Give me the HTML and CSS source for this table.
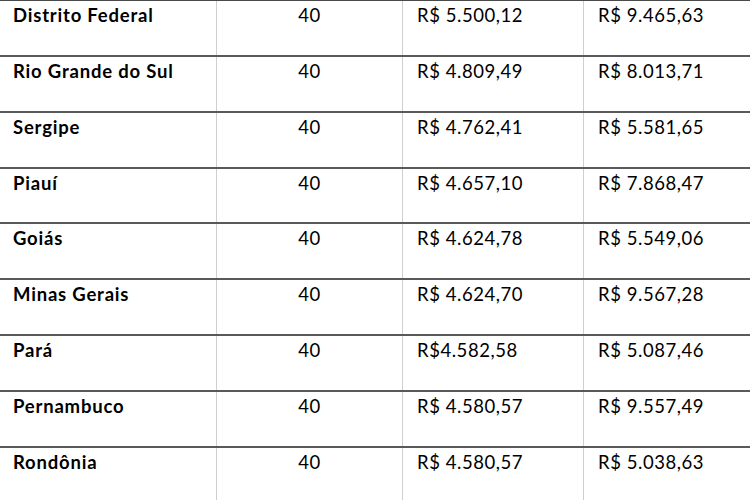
FILE: index.html
```html
<!DOCTYPE html>
<html lang="pt-BR">
<head>
<meta charset="utf-8">
<link rel="stylesheet" href="styles.css">
</head>
<body>
<div class="table">
  <div class="row"><div class="cell state">Distrito Federal</div><div class="cell hours">40</div><div class="cell money">R$ 5.500,12</div><div class="cell money last">R$ 9.465,63</div></div>
  <div class="row"><div class="cell state">Rio Grande do Sul</div><div class="cell hours">40</div><div class="cell money">R$ 4.809,49</div><div class="cell money last">R$ 8.013,71</div></div>
  <div class="row"><div class="cell state">Sergipe</div><div class="cell hours">40</div><div class="cell money">R$ 4.762,41</div><div class="cell money last">R$ 5.581,65</div></div>
  <div class="row"><div class="cell state">Piauí</div><div class="cell hours">40</div><div class="cell money">R$ 4.657,10</div><div class="cell money last">R$ 7.868,47</div></div>
  <div class="row"><div class="cell state">Goiás</div><div class="cell hours">40</div><div class="cell money">R$ 4.624,78</div><div class="cell money last">R$ 5.549,06</div></div>
  <div class="row"><div class="cell state">Minas Gerais</div><div class="cell hours">40</div><div class="cell money">R$ 4.624,70</div><div class="cell money last">R$ 9.567,28</div></div>
  <div class="row"><div class="cell state">Pará</div><div class="cell hours">40</div><div class="cell money">R$4.582,58</div><div class="cell money last">R$ 5.087,46</div></div>
  <div class="row"><div class="cell state">Pernambuco</div><div class="cell hours">40</div><div class="cell money">R$ 4.580,57</div><div class="cell money last">R$ 9.557,49</div></div>
  <div class="row"><div class="cell state">Rondônia</div><div class="cell hours">40</div><div class="cell money">R$ 4.580,57</div><div class="cell money last">R$ 5.038,63</div></div>
</div>
</body>
</html>
```
FILE: styles.css
```css
html, body {
  margin: 0;
  padding: 0;
  background: #ffffff;
}
body {
  width: 750px;
  height: 500px;
  overflow: hidden;
  font-family: Lato, "Open Sans", sans-serif;
  font-size: 18.5px;
  letter-spacing: 0.55px;
  color: #000;
}
.table {
  border-top: 1px solid #4a4a4a;
}
.row {
  display: grid;
  grid-template-columns: 217px 186px 181px 1fr;
  height: 55.857px;
  box-sizing: border-box;
  border-bottom: 2px solid #5a5a5a;
}
.cell {
  border-right: 1px solid #cfcfcf;
  padding-top: 3px;
  line-height: 22px;
  white-space: nowrap;
}
.cell.last {
  border-right: none;
}
.state {
  font-weight: bold;
  letter-spacing: 0.8px;
  padding-left: 13px;
}
.hours {
  text-align: center;
}
.money {
  padding-left: 14px;
}
```
